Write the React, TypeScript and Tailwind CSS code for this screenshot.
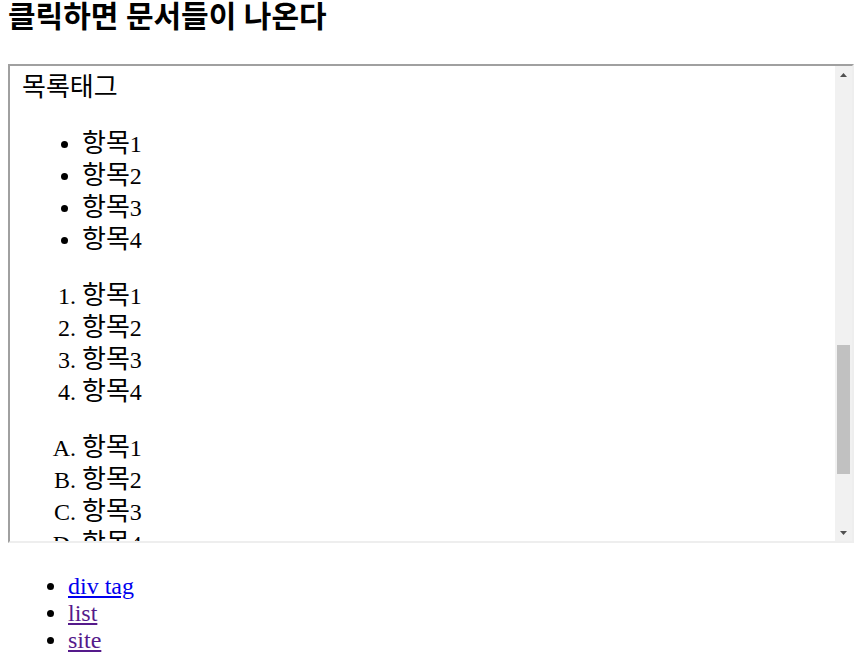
function Item({ n }: { n: string }) {
  return (
    <li>
      <span className="text-[26px]">항목</span>
      {n}
    </li>
  );
}

function Items() {
  return (
    <>
      <Item n="1" />
      <Item n="2" />
      <Item n="3" />
      <Item n="4" />
    </>
  );
}

export default function App() {
  return (
    <div className="min-h-[657px] bg-white px-2 text-black font-['Liberation_Serif','Noto_Sans_CJK_KR',serif]">
      <h1 className="text-[30px] font-bold leading-[34px]">클릭하면 문서들이 나온다</h1>

      <div className="mt-[30px] flex h-[479px] w-[846px] border-2 border-t-[#a0a0a0] border-l-[#a0a0a0] border-r-[#eeeeee] border-b-[#eeeeee]">
        <div className="flex-1 overflow-hidden bg-white pl-3 pt-[6px] text-[24px] leading-[32px]">
          <div className="text-[26px]">목록태그</div>
          <ul className="mt-6 list-disc pl-[60px]">
            <Items />
          </ul>
          <ol className="mt-6 list-decimal pl-[60px]">
            <Items />
          </ol>
          <ol className="mt-6 list-[upper-alpha] pl-[60px]">
            <Items />
          </ol>
          <ol className="mt-6 list-[upper-roman] pl-[60px]">
            <Items />
          </ol>
        </div>
        <div className="flex w-[17px] flex-col bg-[#f1f1f1]">
          <div className="flex h-[17px] items-center justify-center">
            <svg width="7" height="4" viewBox="0 0 7 4">
              <polygon points="3.5,0 7,4 0,4" fill="#505050" />
            </svg>
          </div>
          <div className="h-[262px]" />
          <div className="mx-[2px] h-[129px] bg-[#c1c1c1]" />
          <div className="flex-1" />
          <div className="flex h-[17px] items-center justify-center">
            <svg width="7" height="4" viewBox="0 0 7 4">
              <polygon points="0,0 7,0 3.5,4" fill="#505050" />
            </svg>
          </div>
        </div>
      </div>

      <ul className="mt-[30px] list-disc pl-[60px] text-[24px] leading-[27px]">
        <li>
          <a href="#" className="text-[#0000ee] underline">div tag</a>
        </li>
        <li>
          <a href="#" className="text-[#551a8b] underline">list</a>
        </li>
        <li>
          <a href="#" className="text-[#551a8b] underline">site</a>
        </li>
      </ul>
    </div>
  );
}
